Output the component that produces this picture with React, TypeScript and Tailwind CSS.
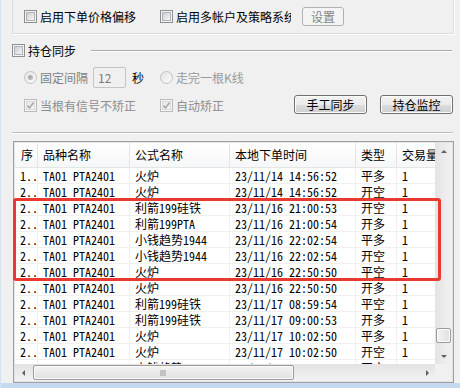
import React from 'react'

const ui = "font-['Noto_Sans_CJK_SC','Microsoft_YaHei',sans-serif]"
const mono = "font-['Noto_Sans_Mono_CJK_SC','Liberation_Mono','Noto_Sans_CJK_SC',monospace]"

const cols = [
  { title: '序', w: 'w-[23px]' },
  { title: '品种名称', w: 'w-[92px]' },
  { title: '公式名称', w: 'w-[100px]' },
  { title: '本地下单时间', w: 'w-[126px]' },
  { title: '类型', w: 'w-[41px]' },
  { title: '交易量', w: 'w-[80px]' },
]

const rows = [
  ['1..', 'TA01 PTA2401', '火炉', '23/11/14 14:56:52', '平多', '1'],
  ['2..', 'TA01 PTA2401', '火炉', '23/11/14 14:56:52', '开空', '1'],
  ['2..', 'TA01 PTA2401', '利箭199硅铁', '23/11/16 21:00:53', '开空', '1'],
  ['2..', 'TA01 PTA2401', '利箭199PTA', '23/11/16 21:00:54', '开多', '1'],
  ['2..', 'TA01 PTA2401', '小钱趋势1944', '23/11/16 22:02:54', '平多', '1'],
  ['2..', 'TA01 PTA2401', '小钱趋势1944', '23/11/16 22:02:54', '开空', '1'],
  ['2..', 'TA01 PTA2401', '火炉', '23/11/16 22:50:50', '平空', '1'],
  ['2..', 'TA01 PTA2401', '火炉', '23/11/16 22:50:50', '开多', '1'],
  ['2..', 'TA01 PTA2401', '利箭199硅铁', '23/11/17 08:59:54', '平空', '1'],
  ['2..', 'TA01 PTA2401', '利箭199硅铁', '23/11/17 09:00:53', '开多', '1'],
  ['2..', 'TA01 PTA2401', '火炉', '23/11/17 10:02:50', '平多', '1'],
  ['2..', 'TA01 PTA2401', '火炉', '23/11/17 10:02:50', '开空', '1'],
  ['2..', 'TA01 PTA2401', '小钱趋势1944', '23/11/17 10:02:50', '开空', '1'],
]

function CheckBox({ checked = false, disabled = false }: { checked?: boolean; disabled?: boolean }) {
  return (
    <span
      className={
        disabled
          ? 'relative block h-[13px] w-[13px] shrink-0 border border-[#bcbcbc] bg-[#f4f4f4]'
          : 'relative block h-[13px] w-[13px] shrink-0 border border-[#8e8f8f] bg-[#f4f4f4]'
      }
    >
      <span
        className={
          disabled
            ? 'absolute inset-[1px] border border-[#dcdcdc] bg-gradient-to-br from-[#e6e6e6] to-[#f6f6f6]'
            : 'absolute inset-[1px] border border-[#aeb3b9] bg-gradient-to-br from-[#cbcfd5] to-[#f6f6f6]'
        }
      />
      {checked && (
        <svg className="absolute left-[1px] top-[1px]" width="9" height="9" viewBox="0 0 9 9">
          <path d="M1.5 4.5 L3.5 7 L7.5 1.5" fill="none" stroke="#a9a9a9" strokeWidth="1.6" />
        </svg>
      )}
    </span>
  )
}

function Radio({ checked = false }: { checked?: boolean }) {
  return (
    <span className="relative block h-[13px] w-[13px] shrink-0 rounded-full border border-[#c2c2c2] bg-gradient-to-br from-[#e4e4e4] to-[#fafafa]">
      {checked && (
        <span className="absolute left-[3px] top-[3px] h-[5px] w-[5px] rounded-full bg-gradient-to-br from-[#9a9a9a] to-[#c8c8c8]" />
      )}
    </span>
  )
}

function Button({ children }: { children: React.ReactNode }) {
  return (
    <button className="flex h-[19px] w-[73px] items-center justify-center rounded-[3px] border border-[#707070] bg-[linear-gradient(#f2f2f2_0%,#ebebeb_50%,#dddddd_50%,#cfcfcf_100%)] text-[12px] leading-none text-black shadow-[inset_0_0_0_1px_#fcfcfc]">
      {children}
    </button>
  )
}

function Arrow({ dir }: { dir: 'up' | 'down' | 'left' | 'right' }) {
  const d = {
    up: 'M1 5 L4 2 L7 5 Z',
    down: 'M1 3 L4 6 L7 3 Z',
    left: 'M5 1 L2 4 L5 7 Z',
    right: 'M3 1 L6 4 L3 7 Z',
  }[dir]
  return (
    <svg width="8" height="8" viewBox="0 0 8 8">
      <path d={d} fill="#606060" />
    </svg>
  )
}

export default function App() {
  return (
    <div className={`relative flex h-[388px] w-[460px] flex-col overflow-hidden border-l border-[#d4e1f1] bg-[#f0f0f0] text-[12px] leading-none text-black ${ui}`}>
      {/* top group box, top edge cut off */}
      <div className="ml-[11px] flex h-[34px] w-[442px] shrink-0 items-center border-x border-b border-[#d5dfe5] pl-[11px] shadow-[1px_1px_0_#fff]">
        <div className="flex w-[136px] items-center gap-[3px]">
          <CheckBox />
          <span>启用下单价格偏移</span>
        </div>
        <div className="flex items-center gap-[3px]">
          <CheckBox />
          <span className="w-[115px] overflow-hidden whitespace-nowrap">启用多帐户及策略系统</span>
        </div>
        <button className="ml-[11px] flex h-[19px] w-[42px] items-center justify-center rounded-[3px] border border-[#adb2b5] bg-[#f4f4f4] text-[12px] leading-none text-[#838383]">
          设置
        </button>
      </div>

      {/* 持仓同步 */}
      <div className="mt-[10px] flex h-[13px] shrink-0 items-center pl-[11px] pr-[8px]">
        <CheckBox />
        <span className="ml-[3px]">持仓同步</span>
        <div className="ml-[15px] h-[2px] flex-1 border-t border-b border-t-[#a9a9a9] border-b-white" />
      </div>

      <div className="mt-[10px] flex h-[21px] shrink-0 items-center pl-[23px]">
        <div className="flex w-[136px] items-center">
          <Radio checked />
          <span className="ml-[3px] text-[#808080]">固定间隔</span>
          <div className="ml-[5px] flex h-[21px] w-[33px] items-center rounded-[2px] border border-[#c4c4c4] pl-[4px] text-[#7a7a7a]">
            12
          </div>
          <span className="ml-[6px]">秒</span>
        </div>
        <Radio />
        <span className="ml-[3px] text-[#9a9a9a]">走完一根K线</span>
      </div>

      <div className="mt-[7px] flex h-[19px] shrink-0 items-start pl-[23px] pr-[7px]">
        <div className="flex w-[136px] items-center pt-[4px]">
          <CheckBox checked disabled />
          <span className="ml-[3px] text-[#8d8d8d]">当根有信号不矫正</span>
        </div>
        <div className="flex items-center pt-[4px]">
          <CheckBox checked disabled />
          <span className="ml-[3px] text-[#8d8d8d]">自动矫正</span>
        </div>
        <div className="ml-auto flex gap-[13px]">
          <Button>手工同步</Button>
          <Button>持仓监控</Button>
        </div>
      </div>

      <div className="ml-[11px] mr-[7px] mt-[18px] h-[2px] shrink-0 border-t border-b border-t-[#bdbdbd] border-b-white" />

      {/* list view */}
      <div className="ml-[12px] mt-[7px] flex h-[242px] w-[441px] shrink-0 flex-col border border-[#a0a0a0] bg-white">
        <div className="flex min-h-0 flex-1 flex-col border border-[#e3e3e3]">
          <div className="flex min-h-0 flex-1">
            <div className="min-w-0 flex-1 overflow-hidden">
              <div className="flex h-[25px] border-b border-[#e5e5e5] bg-gradient-to-b from-white to-[#f6f7f8]">
                {cols.map((c, i) => (
                  <div
                    key={i}
                    className={`${c.w} flex shrink-0 items-center overflow-hidden whitespace-nowrap border-r border-[#e5e5e5] ${i === 0 ? 'pl-[6px]' : 'pl-[5px]'}`}
                  >
                    {c.title}
                  </div>
                ))}
              </div>
              {rows.map((r, ri) => (
                <div key={ri} className={`flex h-[16px] border-b border-[#f0f0f0] ${mono}`}>
                  {r.map((v, ci) => (
                    <div
                      key={ci}
                      className={`${cols[ci].w} flex shrink-0 items-center overflow-hidden whitespace-nowrap border-r border-[#f0f0f0] pl-[5px]`}
                    >
                      {v}
                    </div>
                  ))}
                </div>
              ))}
            </div>
            {/* vertical scrollbar */}
            <div className="flex w-[17px] shrink-0 flex-col bg-[linear-gradient(90deg,#e3e3e3,#f2f2f2)]">
              <div className="flex h-[17px] items-center justify-center">
                <Arrow dir="up" />
              </div>
              <div className="flex flex-1 flex-col justify-end pb-[4px]">
                <div className="mx-[1px] h-[15px] rounded-[2px] border border-[#9b9b9b] bg-[linear-gradient(90deg,#f3f3f3,#e1e1e1)] shadow-[inset_0_0_0_1px_#fafafa]" />
              </div>
              <div className="flex h-[17px] items-center justify-center">
                <Arrow dir="down" />
              </div>
            </div>
          </div>
          {/* horizontal scrollbar */}
          <div className="flex h-[17px] shrink-0">
            <div className="flex flex-1 bg-[linear-gradient(#e3e3e3,#f2f2f2)]">
              <div className="flex w-[17px] items-center justify-center">
                <Arrow dir="left" />
              </div>
              <div className="flex flex-1 items-stretch py-[1px] pl-[1px]">
                <div className="flex w-[261px] items-center justify-center rounded-[2px] border border-[#9b9b9b] bg-[linear-gradient(#f3f3f3,#e1e1e1)] shadow-[inset_0_0_0_1px_#fafafa]">
                  <svg width="7" height="6" viewBox="0 0 7 6">
                    <path d="M1 0V6M3 0V6M5 0V6" stroke="#9a9a9a" strokeWidth="1" />
                  </svg>
                </div>
              </div>
              <div className="flex w-[17px] items-center justify-center">
                <Arrow dir="right" />
              </div>
            </div>
            <div className="w-[17px] bg-[#f0f0f0]" />
          </div>
        </div>
      </div>

      <div className="mt-auto h-[5px] shrink-0 bg-[#c5d9f1]" />

      {/* red annotation box */}
      <div className="absolute left-[12px] top-[198px] h-[83px] w-[428px] rounded-[3px] border-[3px] border-[#e83a30]" />
    </div>
  )
}
